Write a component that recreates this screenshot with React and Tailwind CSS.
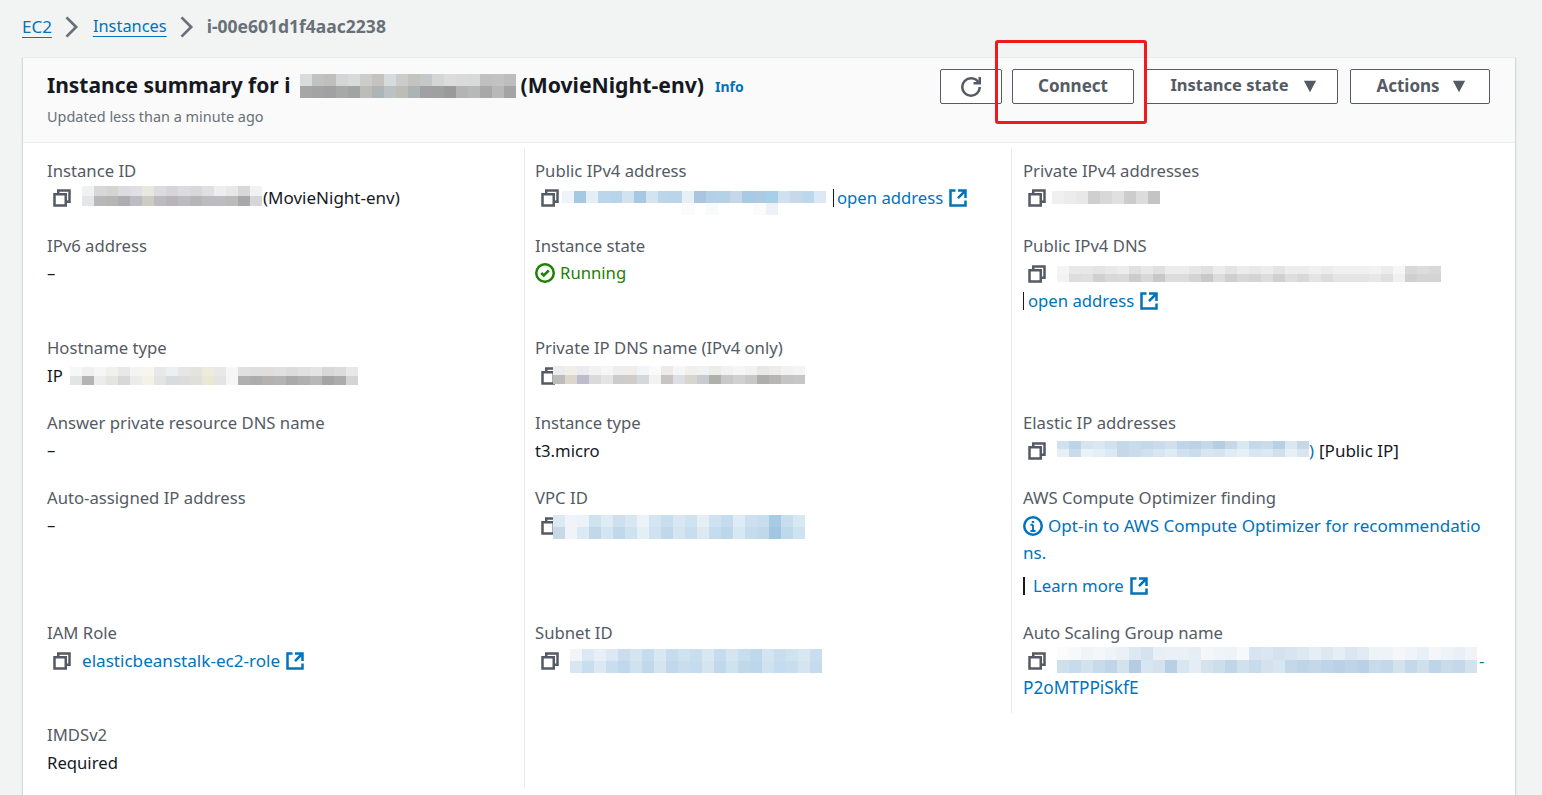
import React from "react";

const Copy = ({ className = "" }) => (
  <svg viewBox="0 0 16 16" fill="none" stroke="#545b64" strokeWidth="2" className={`w-[20px] h-[20px] shrink-0 ${className}`}>
    <path d="M2 5h9v9H2z" />
    <path d="M5 5V2h9v9h-3" />
  </svg>
);

const Ext = () => (
  <svg viewBox="0 0 16 16" fill="none" stroke="#0073bb" strokeWidth="2" className="w-[20px] h-[20px] shrink-0 ml-[5px]">
    <path d="M14 8.01v-6H8M14.02 2 8 8.01M6 2.01H2v12h12v-3.99" />
  </svg>
);

const Caret = ({ className = "ml-[14px]" }) => (
  <svg viewBox="0 0 16 16" fill="#545b64" className={`w-[14px] h-[14px] ${className}`}>
    <path d="M1 2h14L8 15z" />
  </svg>
);

const Mosaic = ({ rows, className = "", rowClass = "h-[12px]" }) => (
  <span className={`inline-flex flex-col shrink-0 ${className}`}>
    {rows.map((row, i) => (
      <span key={i} className={`flex ${rowClass}`}>
        {row.map((c, j) => (
          <span key={j} className="w-[12px] h-full" style={{ backgroundColor: c }} />
        ))}
      </span>
    ))}
  </span>
);

const g = (s) => s.split(" ").map((c) => (c === "-" ? "transparent" : "#" + c));

const Label = ({ children }) => <div className="h-[28px] leading-[27px] text-[#545b64]">{children}</div>;

const Value = ({ children, className = "" }) => (
  <div className={`flex items-center h-[27px] leading-[27px] text-[#16191f] ${className}`}>{children}</div>
);

const Link = ({ children, className = "" }) => <span className={`text-[#0073bb] ${className}`}>{children}</span>;

const Field = ({ label, h, children }) => (
  <div className={h}>
    <Label>{label}</Label>
    {children}
  </div>
);

const Dash = () => <Value className="-mt-[1px]">–</Value>;

const Btn = ({ children, className = "" }) => (
  <div className={`h-[35px] flex items-center justify-center pb-[2px] border border-[#545b64] rounded-[2px] bg-white font-bold text-[#545b64] ${className}`}>
    {children}
  </div>
);

export default function App() {
  return (
    <div className="relative h-[795px] overflow-hidden bg-[#f2f3f3] font-['Noto_Sans',sans-serif] text-[16.7px] px-[22px]">
      <nav className="h-[57px] flex items-center pb-[4px]">
        <span className="text-[#0073bb] text-[17px] underline underline-offset-[4px]">EC2</span>
        <svg viewBox="0 0 16 16" fill="none" stroke="#687078" strokeWidth="2" className="w-[22px] h-[22px] mx-[9px]"><path d="m4 1 7 7-7 7" /></svg>
        <span className="text-[#0073bb] text-[16.4px] underline underline-offset-[4px] ml-[1px]">Instances</span>
        <svg viewBox="0 0 16 16" fill="none" stroke="#687078" strokeWidth="2" className="w-[22px] h-[22px] mx-[9px]"><path d="m4 1 7 7-7 7" /></svg>
        <span className="font-bold text-[17.5px] text-[#687078]">i-00e601d1f4aac2238</span>
      </nav>

      <section className="w-[1494px] h-[760px] bg-white border-l border-r border-[#d5dbdb] border-t border-t-[#eaeded] shadow-[0_1px_1px_rgba(0,28,36,0.2)]">
        <header className="h-[85px] bg-[#fafafa] border-b border-[#eaeded] flex justify-between pl-[24px] pr-[25px]">
          <div className="pt-[10px]">
            <h1 className="flex items-center h-[36px] text-[21px] font-bold text-[#16191f] whitespace-nowrap">
              <span>Instance summary for i</span>
              <Mosaic className="ml-[10px]" rows={[
                g("dadcdc c2c2c2 bfbfbd d4d5d6 d8d9d9 ccccca c4c3bf d6dcde cccccc c4c4bf c4c8ca d4d6d6 dcdcdc dadada d8d9d9 c0c0c0 c2c2c2 bdbdbd"),
                g("a6a6a6 a3a3a3 a1a1a3 a8a8a8 a0a4a5 bdbcb8 adb5b8 bcc1c3 bdbdb5 abb3b5 a1a1a3 a0a0a2 999b99 b4b4b4 b8b8b8 a8a8a8 b8b8b8 a4a4a4"),
              ]} />
              <span className="ml-[4px] -mt-[2px] text-[21.2px]">(MovieNight-env)</span>
              <span className="ml-[11px] text-[14px] text-[#0073bb]">Info</span>
            </h1>
            <div className="text-[14.45px] text-[#687078] leading-[24px] pt-[1px]">Updated less than a minute ago</div>
          </div>
          <div className="flex gap-[10px] pt-[11px]">
            <Btn className="w-[62px]">
              <svg viewBox="0 0 16 16" fill="none" stroke="#545b64" strokeWidth="2" className="w-[20px] h-[20px] mt-[2px]">
                <path d="M10 5h5V0" />
                <path d="M15 8a6.957 6.957 0 0 1-7 7 6.957 6.957 0 0 1-7-7 6.957 6.957 0 0 1 7-7 6.87 6.87 0 0 1 6.3 4" />
              </svg>
            </Btn>
            <Btn className="w-[122px] text-[17px]">Connect</Btn>
            <Btn className="w-[194px] pl-[5px] text-[16.5px]">Instance state<Caret /></Btn>
            <Btn className="w-[140px] pl-[2px] ml-[2px] text-[17px]">Actions<Caret className="ml-[12px]" /></Btn>
          </div>
        </header>

        <div className="grid grid-cols-[501px_487px_1fr] pt-[5px]">
          <div className="pl-[24px] pt-[9px] h-[640px]">
            <Field label="Instance ID" h="h-[75px]">
              <Value className="pl-[5px] -mt-[1px]">
                <Copy />
                <Mosaic className="ml-[10px] mr-[1px] -mt-[4px]" rowClass="h-[10px]" rows={[
                  g("f0f2f2 d8d8da d4d4d0 dcdce0 e0e0e4 e8e8e0 dcdce0 d8d4da dcdce0 d8d8da e0e0e4 eeeeee e8e8e8 d8d8d8 f0f2f4"),
                  g("e4e7e8 b8b8ba b8b6b4 aeaeb2 bbbcc2 cccbc4 bcbcc0 b8b4ba bcbcc0 b6b6b8 bcbcc0 bcbcc2 bbbbbb a8a8aa d4d6d8"),
                ]} />
                <span className="text-[17px]">(MovieNight-env)</span>
              </Value>
            </Field>
            <Field label="IPv6 address" h="h-[102px]"><Dash /></Field>
            <Field label="Hostname type" h="h-[75px]">
              <Value>
                <span>IP</span>
                <Mosaic className="ml-[7px]" rowClass="h-[9px]" rows={[
                  g("f6f7f7 f0f0f0 f6f6f6 f0f0ee e8e8e8 f4f4f2 f6f6ee e8e8e8 ecf0f0 e6e6e6 e4e4de ececdc e8e8e8 f6f6f6 e0e0e0 dedede e0dedc e0e0e0 dcdcdc e0e0e0 e4e4e4 d8d8d8 dcdcdc e8e8e8"),
                  g("e2e4e6 b4b4b4 ebecec e4e4e2 d8d8d8 ececea f2f2e6 e4e4e4 d8dcdc dcdcdc e0e0d8 e8e8d4 e4e4e4 f6f6f6 b0b0b0 acacac b4b2b0 b4b4b4 aaaaaa b0b0b0 b8b8b8 a4a4a4 acacac d4d4d4"),
                ]} />
              </Value>
            </Field>
            <Field label="Answer private resource DNS name" h="h-[75px]"><Dash /></Field>
            <Field label="Auto-assigned IP address" h="h-[135px]"><Dash /></Field>
            <Field label="IAM Role" h="h-[102px]">
              <Value className="pl-[5px]">
                <Copy />
                <Link className="ml-[10px] text-[17.1px]">elasticbeanstalk-ec2-role</Link>
                <Ext />
              </Value>
            </Field>
            <Field label="IMDSv2" h="h-[54px]"><Value>Required</Value></Field>
          </div>

          <div className="border-l border-[#eaeded] pl-[10px] pt-[9px] h-[640px]">
            <Field label="Public IPv4 address" h="h-[75px]">
              <Value className="pl-[5px] -mt-[1px]">
                <Copy />
                <Mosaic className="ml-[2px] mt-[10px]" rowClass="h-[12px]" rows={[
                  g("eef4f9 a6c9e2 e6edf5 bbd6ea b6d5ea d2e2ef a6c8e2 d3e3ef bcd5e8 bad4e8 e8f0f7 aac6de b4d0e6 b6d0e6 c6d8e8 a8cae4 aecae2 a8cfe8 cfe0ef c8d8e8 bdd8ed dce9f4"),
                  g("- - - - - - - - - - fafbfd - f8fafc - - - fafbfd ecf2f8 - - - -"),
                ]} />
                <span className="ml-[7px] w-[1px] h-[18px] bg-[#16191f]" />
                <Link className="ml-[3px]">open address</Link>
                <Ext />
              </Value>
            </Field>
            <Field label="Instance state" h="h-[102px]">
              <Value className="-mt-[1px]">
                <svg viewBox="0 0 16 16" fill="none" stroke="#1d8102" strokeWidth="2" className="w-[20px] h-[20px] shrink-0 mr-[5px] mt-[1px]">
                  <circle cx="8" cy="8" r="7" />
                  <path d="m5 8 2 2 4-4" />
                </svg>
                <span className="text-[#1d8102]">Running</span>
              </Value>
            </Field>
            <Field label="Private IP DNS name (IPv4 only)" h="h-[75px]">
              <Value className="pl-[5px]">
                <Copy />
                <Mosaic className="-ml-[7px] -mt-[1px]" rowClass="h-[9px]" rows={[
                  g("ececec f2eee8 ececf0 f2f2f2 f6f6f6 eeeeee f0eeec f2f4f6 fafafa eeeaea f4f6f8 f2f0ec f0f2f4 ecece8 f2f2f2 f6f6f6 f2f2f2 e8e8e6 eeecea f2f2f2 f4f4f4"),
                  g("bcbcbc dcd6cc bcbccc dadada e4e4e4 cccccc d0ccc8 d4d8dc f2f2f2 c8c4c4 dce0e4 d8d4ce c8ccd0 b0b0aa c8c8c8 d0d0d0 c8c8c8 aeaeac b8b6b2 c4c4c4 c6c6c6"),
                ]} />
              </Value>
            </Field>
            <Field label="Instance type" h="h-[75px]"><Value>t3.micro</Value></Field>
            <Field label="VPC ID" h="h-[135px]">
              <Value className="pl-[5px]">
                <Copy />
                <Mosaic className="-ml-[7px] mt-[2px]" rows={[
                  g("dce8f2 f0f4f8 ecf2f7 cfe2f0 e0ecf5 cde0ef d8e8f3 ecf2f7 d4e4f1 c8deee d9e7f2 cfe2f0 e4eef5 cfe2f0 c4dcee e0ecf5 cee0ef c8deee a8cbe4 c8deee d8e8f3"),
                  g("c8d8e4 f0f4f8 dce8f2 c0d8ea d4e4f1 c0d8ea cfe2f0 e4eef5 d0e2f0 c0d8ea d4e4f1 c8deee dce8f2 c4dcee bcd6ea d8e8f3 c4dcee c0d8ea a0c6e2 bed8ec cfe2f0"),
                ]} />
              </Value>
            </Field>
            <Field label="Subnet ID" h="h-[102px]">
              <Value className="pl-[5px]">
                <Copy />
                <Mosaic className="ml-[10px]" rows={[
                  g("f0f5fa dce9f4 e8f0f7 dce9f4 c8deee d4e4f1 c4dcee d8e8f3 c4dcee cfe2f0 c8deee d8e8f3 c4dcee d4e4f1 c8deee bfd9ec d4e4f1 c8deee cfe2f0 d8e8f3 c8deee"),
                  g("d8e6f2 c8deee dce9f4 c8deee c0d8ea cfe2f0 c0d8ea d4e4f1 c0d8ea c8deee c4dcee d4e4f1 c0d8ea cfe2f0 c0d8ea bcd6ea cfe2f0 c4dcee c8deee d4e4f1 c4dcee"),
                ]} />
              </Value>
            </Field>
          </div>

          <div className="border-l border-[#eaeded] pl-[11px] pt-[9px] h-[565px] pr-[30px]">
            <Field label="Private IPv4 addresses" h="h-[75px]">
              <Value className="pl-[4px] -mt-[1px]">
                <Copy />
                <Mosaic className="ml-[5px]" rowClass="h-[13px]" rows={[
                  g("f0f0f0 ececec e8e8e8 cfcfcf d8d8d8 e0e0e0 cccccc dcdcdc c4c4c4"),
                ]} />
              </Value>
            </Field>
            <Field label="Public IPv4 DNS" h="h-[177px]">
              <Value className="pl-[4px]">
                <Copy />
                <Mosaic className="ml-[10px]" rowClass="h-[8px]" rows={[
                  g("f4f4f4 e8e8e8 e8e8e8 e4e4e4 e8e8e8 ececec e0e0e0 e8e8e8 e0e0e0 ececec ececec e6e6e6 e0e0e0 ececec e4e4e4 ececec e8e8e8 ededed e4e4e4 ededed ececec f0f0f0 ececec f0f0f0 f0f0f0 f0f0f0 f2f2f2 ececec f6f6f6 d8d8d8 dcdcdc d8d8d8"),
                  g("f2f2f2 dddddd e0e0e0 d0d0d0 d8d8d8 dadada cccccc d8d8d8 c8c8c8 dcdcdc dcdcdc d4d4d4 c8c8c8 dcdcdc cfcfcf d8d8d8 d4d4d4 dcdcdc d0d0d0 dedede d8d8d8 e4e4e4 dcdcdc e4e4e4 e4e4e4 e4e4e4 e8e8e8 e0e0e0 f0f0f0 d0d0d0 d4d4d4 d4d4d4"),
                ]} />
              </Value>
              <Value>
                <span className="w-[1px] h-[18px] bg-[#16191f]" />
                <Link className="ml-[4px]">open address</Link>
                <Ext />
              </Value>
            </Field>
            <Field label="Elastic IP addresses" h="h-[75px]">
              <Value className="pl-[4px]">
                <Copy />
                <Mosaic className="ml-[10px] -mt-[4px]" rowClass="h-[8px]" rows={[
                  g("cfe0ee bcd4e8 d6e4f0 dae8f2 cfe0ee c4d8e8 c8dcec c4d8e8 c8dcec d0e0ee c0d6e8 bcd2e6 c4d8e8 b4cee2 c4d8e8 dae8f2 c4d8e8 c8dcec b8d0e4 dae8f2 c4d8e8"),
                  g("e6eff6 cadcec ecf3f8 e4eef5 dde9f2 c4d8e8 cadcec d0e0ee d8e6f2 e0ecf5 d0e0ee cadcec d8e6f2 d4e4f1 e0ecf5 e8f0f7 d8e6f2 dce9f4 d0e0ee e8f0f7 d8e6f2"),
                ]} />
                <span className="text-[#0073bb]">)</span>
                <span className="ml-[5px] text-[17px]">[Public IP]</span>
              </Value>
            </Field>
            <Field label="AWS Compute Optimizer finding" h="h-[135px]">
              <div className="leading-[27px] text-[#0073bb] text-[17.05px] break-all">
                <svg viewBox="0 0 16 16" fill="none" stroke="#0073bb" strokeWidth="2" className="inline-block w-[20px] h-[20px] mr-[5px] -mt-[3px] align-middle">
                  <circle cx="8" cy="8" r="7" />
                  <path d="M8 7v5M6 7h2M6 12h4" strokeWidth="1.5" />
                  <path d="M7 4h2v1.5H7z" fill="#0073bb" stroke="none" />
                </svg>
                Opt-in to AWS Compute Optimizer for recommendations.
              </div>
              <div className="flex items-center h-[27px] mt-[6px]">
                <span className="w-[2px] h-[18px] bg-[#16191f]" />
                <Link className="ml-[8px]">Learn more</Link>
                <Ext />
              </div>
            </Field>
            <Field label="Auto Scaling Group name" h="h-[80px]">
              <Value className="pl-[4px]">
                <Copy />
                <Mosaic className="ml-[10px] -mt-[1px]" rowClass="h-[13px]" rows={[
                  g("fafbfc f6f8fa f0f4f8 f4f6f9 eff4f8 eaf0f6 dde8f1 d6e3ee e8eff6 eaf0f6 eaf0f6 e6edf4 f4f6f9 eff4f8 eef3f8 f6f8fa d8e4ef dae6f0 d4e2ee d8e4ef dce8f2 e6eef5 dde8f1 e6eef5 dae6f0 e2ebf3 eef3f8 eef3f8 f4f6f9 f0f4f8 e8eff6 f4f6f9 eef3f8 e8eff6 f0f4f8"),
                  g("cfdfec c8dbeb d4e2ee c8dbeb c0d6e8 d4e2ee b4cce2 d8e6f1 d4e2ee b8d0e4 d8e6f1 e4edf4 d4e2ee ccdeec c0d6e8 d0e0ed c8dbeb d4e2ee d8e6f1 c4d8e9 bed5e8 c4d8e9 bed5e8 b8d1e6 bed5e8 b8d1e6 c8dbeb c4d8e9 d4e2ee c4d8e9 cfdfec bed5e8 c8dbeb c4d8e9 d4e2ee"),
                ]} />
                <Link className="ml-[2px]">-</Link>
              </Value>
              <Value><Link className="text-[17.25px]">P2oMTPPiSkfE</Link></Value>
            </Field>
          </div>
        </div>
      </section>

      <div className="absolute left-[995px] top-[40px] w-[152px] h-[84px] border-[3px] border-[#f01a1a] rounded-[3px]" />
    </div>
  );
}
